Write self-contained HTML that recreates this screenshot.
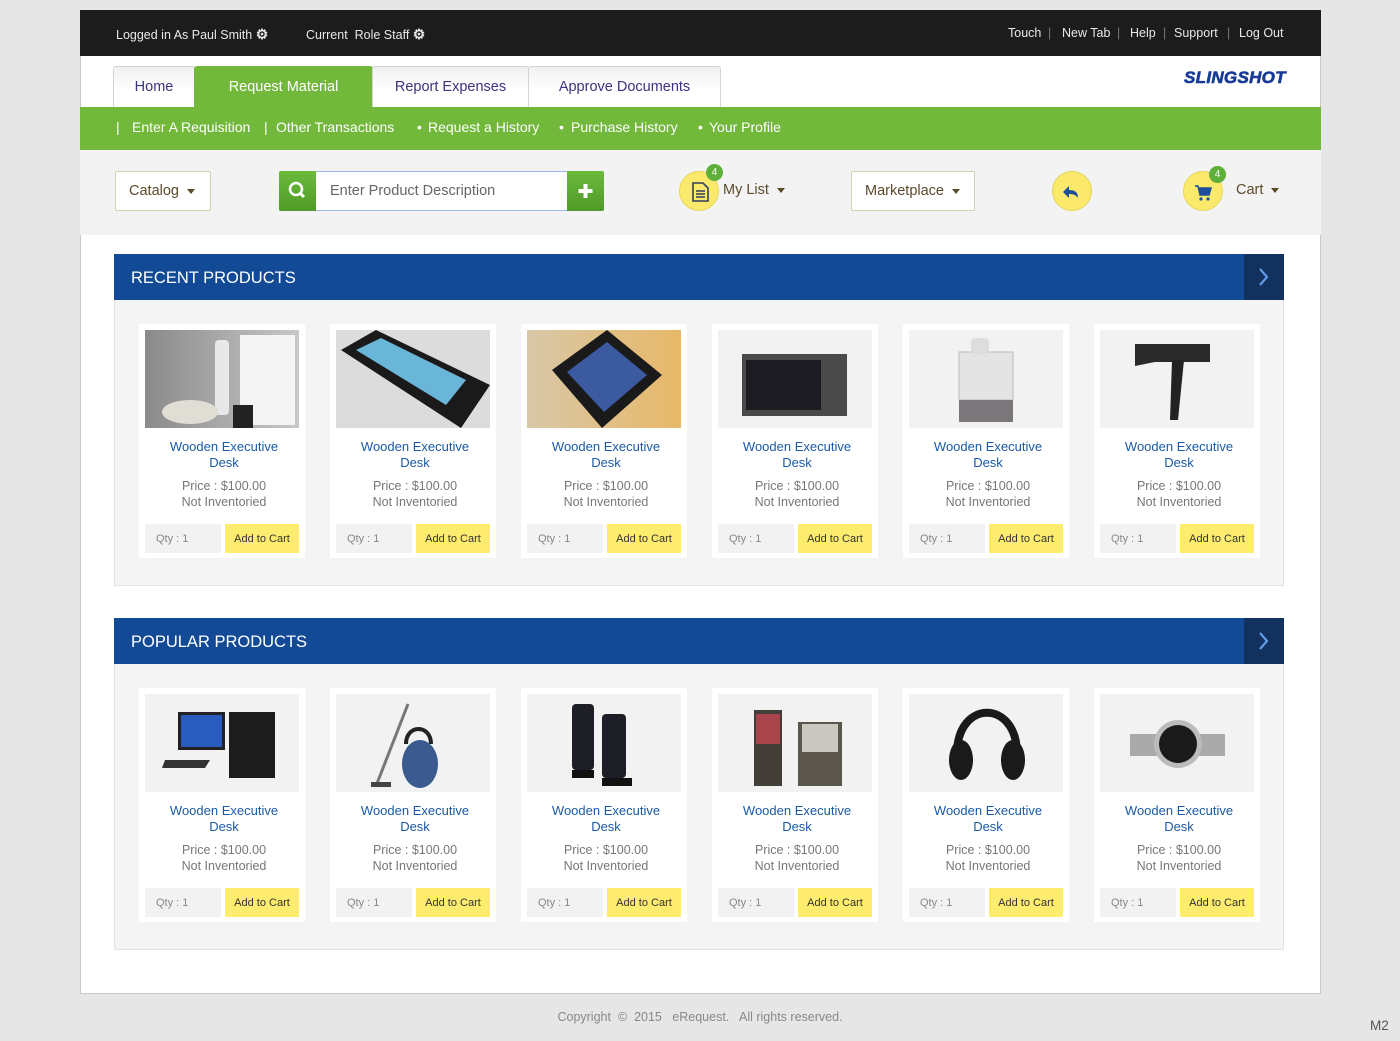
<!DOCTYPE html>
<html><head><meta charset="utf-8"><style>
*{margin:0;padding:0;box-sizing:border-box}
body{width:1400px;height:1041px;background:#e6e6e6;font-family:"Liberation Sans",sans-serif;position:relative;overflow:hidden}
.a{position:absolute}
#page{left:80px;top:10px;width:1241px;height:984px;background:#fff;border:1px solid #c8c8c8}
#top{left:80px;top:10px;width:1241px;height:46px;background:#1c1c1c;color:#e8e8e8;font-size:12.5px}
#top span{top:16px}
.sep{color:#777}
.tab{top:66px;height:41px;border:1px solid #d4d4d4;border-bottom:none;border-radius:3px 3px 0 0;background:linear-gradient(#f0f0f0,#fff 60%);color:#3b3480;font-size:14.5px;text-align:center;line-height:41px}
#green{left:80px;top:107px;width:1241px;height:43px;background:#72b83a;color:#fff;font-size:14px}
#green span{position:absolute;top:12px}
#tool{left:80px;top:150px;width:1241px;height:85px;background:#f3f3f3}
.btn{background:#fff;border:1px solid #d6d0b0;border-radius:2px;color:#5a4a2a;font-size:14.5px;line-height:38px;padding-left:13px}
.car{display:inline-block;width:0;height:0;border-left:4px solid transparent;border-right:4px solid transparent;border-top:5px solid #5a4a2a;vertical-align:middle;margin-left:8px}
.yc{width:40px;height:40px;border-radius:50%;background:#fbe96b;border:1px solid #e6d65a}
.badge{width:17px;height:17px;border-radius:50%;background:#5fb03a;color:#fff;font-size:10px;text-align:center;line-height:17px}
.hdr{left:114px;width:1170px;height:46px;background:#124a96;color:#fff;font-size:16.5px;line-height:48px;padding-left:17px}
.hdr .sq{position:absolute;right:0;top:0;width:40px;height:46px;background:#13315e}
.panel{left:114px;width:1170px;height:286px;background:#f4f4f4;border:1px solid #e2e2e2;border-top:none}
.card{width:166px;height:234px;background:#fff}
.img{position:absolute;left:6px;top:6px;width:154px;height:98px;background:#f2f2f2;overflow:hidden}
.t{position:absolute;left:2px;width:166px;text-align:center;top:115px;color:#1a5aa6;font-size:13px;line-height:16px}
.p{position:absolute;left:2px;width:166px;text-align:center;top:154px;color:#777;font-size:12.5px;line-height:16px}
.q{position:absolute;left:6px;top:200px;width:76px;height:29px;background:#f2f2f2;color:#888;font-size:11px;line-height:30px;padding-left:11px}
.ac{position:absolute;left:86px;top:200px;width:74px;height:29px;background:#fdec6e;color:#333;font-size:11px;line-height:30px;text-align:center}
</style></head><body>
<div id="page" class="a"></div>
<div id="top" class="a">
<span class="a" style="left:36px">Logged in As Paul Smith <b style="font-size:14px">⚙</b></span>
<span class="a" style="left:226px">Current &nbsp;Role Staff <b style="font-size:14px">⚙</b></span>
<span class="a" style="left:928px">Touch</span><span class="a sep" style="left:968px">|</span>
<span class="a" style="left:982px">New Tab</span><span class="a sep" style="left:1037px">|</span>
<span class="a" style="left:1050px">Help</span><span class="a sep" style="left:1083px">|</span>
<span class="a" style="left:1094px">Support</span><span class="a sep" style="left:1147px">|</span>
<span class="a" style="left:1159px">Log Out</span>
</div>
<div class="a tab" style="left:113px;width:82px">Home</div>
<div class="a tab" style="left:194px;width:179px;background:#72b83a;border-color:#72b83a;color:#fff">Request Material</div>
<div class="a tab" style="left:372px;width:157px">Report Expenses</div>
<div class="a tab" style="left:528px;width:193px">Approve Documents</div>
<div class="a" style="left:1184px;top:68px;color:#163a96;font-size:17px;font-weight:bold;font-style:italic;letter-spacing:0.3px;-webkit-text-stroke:0.6px #163a96">SLINGSHOT</div>
<div id="green" class="a">
<span style="left:36px">|</span><span style="left:52px">Enter A Requisition</span>
<span style="left:184px">|</span><span style="left:196px">Other Transactions</span>
<span style="left:337px">•</span><span style="left:348px">Request a History</span>
<span style="left:479px">•</span><span style="left:491px">Purchase History</span>
<span style="left:618px">•</span><span style="left:629px">Your Profile</span>
</div>
<div id="tool" class="a"></div>
<div class="a btn" style="left:115px;top:171px;width:96px;height:40px">Catalog<span class="car"></span></div>
<div class="a" style="left:279px;top:171px;width:325px;height:40px;border:1px solid #9ab8e8;border-radius:2px;background:#fff"></div>
<div class="a" style="left:279px;top:171px;width:37px;height:40px;background:linear-gradient(#6cbb3c,#4f9a28);border-radius:2px 0 0 2px"><svg width="37" height="40"><circle cx="17" cy="18" r="6" fill="none" stroke="#fff" stroke-width="2.5"/><line x1="21" y1="22" x2="25" y2="26" stroke="#fff" stroke-width="3"/></svg></div>
<div class="a" style="left:330px;top:183px;color:#666;font-size:14.5px">Enter Product Description</div>
<div class="a" style="left:567px;top:171px;width:37px;height:40px;background:linear-gradient(#6cbb3c,#4f9a28);border-radius:0 2px 2px 0"><svg width="37" height="40"><path d="M18.5 13v14M11.5 20h14" stroke="#fff" stroke-width="4"/></svg></div>
<div class="a yc" style="left:679px;top:171px"><svg width="40" height="40"><path d="M13 11h10l5 5v13h-15z" fill="none" stroke="#333c5c" stroke-width="1.6"/><path d="M16 19h9M16 22h9M16 25h9" stroke="#333c5c" stroke-width="1.4"/></svg></div>
<div class="a badge" style="left:706px;top:164px">4</div>
<div class="a" style="left:723px;top:182px;color:#5a4a2a;font-size:14.5px">My List<span class="car"></span></div>
<div class="a btn" style="left:851px;top:171px;width:124px;height:40px">Marketplace<span class="car"></span></div>
<div class="a yc" style="left:1052px;top:171px"><svg width="40" height="40"><path d="M25 26c0-6-3-8-9-8v-4l-6 6 6 6v-4c4 0 7 1 9 4z" fill="#1d4f9a"/></svg></div>
<div class="a yc" style="left:1183px;top:171px"><svg width="40" height="40"><path d="M11 14h3l2 9h9l2-7h-12" fill="#1d4f9a" stroke="#1d4f9a" stroke-width="1.5"/><circle cx="17" cy="27" r="1.6" fill="#1d4f9a"/><circle cx="24" cy="27" r="1.6" fill="#1d4f9a"/></svg></div>
<div class="a badge" style="left:1209px;top:166px">4</div>
<div class="a" style="left:1236px;top:182px;color:#5a4a2a;font-size:14.5px">Cart<span class="car"></span></div>

<div class="a hdr" style="top:254px">RECENT PRODUCTS<div class="sq"><svg width="40" height="46"><path d="M16 15l7 8-7 8" fill="none" stroke="#5f9de8" stroke-width="2.2"/></svg></div></div>
<div class="a panel" style="top:300px"></div>
<div class="a hdr" style="top:618px">POPULAR PRODUCTS<div class="sq"><svg width="40" height="46"><path d="M16 15l7 8-7 8" fill="none" stroke="#5f9de8" stroke-width="2.2"/></svg></div></div>
<div class="a panel" style="top:664px"></div>

<div class="a card" style="left:139px;top:324px"><div class="img" style="background:linear-gradient(90deg,#8a8a8a,#c8c8c8)"><svg width="154" height="98"><rect x="95" y="5" width="55" height="90" fill="#f4f4f4"/><rect x="70" y="10" width="14" height="75" rx="4" fill="#e8e8e8"/><ellipse cx="45" cy="82" rx="28" ry="12" fill="#e0ddd5"/><rect x="88" y="75" width="20" height="23" fill="#222"/></svg></div><div class="t">Wooden Executive<br>Desk</div><div class="p">Price : $100.00<br>Not Inventoried</div><div class="q">Qty : 1</div><div class="ac">Add to Cart</div></div>
<div class="a card" style="left:330px;top:324px"><div class="img" style="background:#dcdcdc"><svg width="154" height="98"><path d="M5 20L40 0 154 55 125 98z" fill="#1a1a1a"/><path d="M20 20L45 8 130 50 110 75z" fill="#6ab6d8"/></svg></div><div class="t">Wooden Executive<br>Desk</div><div class="p">Price : $100.00<br>Not Inventoried</div><div class="q">Qty : 1</div><div class="ac">Add to Cart</div></div>
<div class="a card" style="left:521px;top:324px"><div class="img" style="background:linear-gradient(90deg,#d8c8a8,#e8b868)"><svg width="154" height="98"><path d="M25 40L80 0 135 45 75 98z" fill="#1a1a1a"/><path d="M40 42L80 12 120 45 77 82z" fill="#3b5aa0"/></svg></div><div class="t">Wooden Executive<br>Desk</div><div class="p">Price : $100.00<br>Not Inventoried</div><div class="q">Qty : 1</div><div class="ac">Add to Cart</div></div>
<div class="a card" style="left:712px;top:324px"><div class="img"><svg width="154" height="98"><rect x="24" y="24" width="105" height="62" fill="#4a4a4a"/><rect x="28" y="30" width="75" height="50" fill="#1c1c22"/></svg></div><div class="t">Wooden Executive<br>Desk</div><div class="p">Price : $100.00<br>Not Inventoried</div><div class="q">Qty : 1</div><div class="ac">Add to Cart</div></div>
<div class="a card" style="left:903px;top:324px"><div class="img"><svg width="154" height="98"><rect x="50" y="22" width="54" height="48" fill="#e4e4e4" stroke="#bbb"/><rect x="50" y="70" width="54" height="22" fill="#7a767a"/><rect x="62" y="8" width="18" height="16" rx="4" fill="#ddd"/></svg></div><div class="t">Wooden Executive<br>Desk</div><div class="p">Price : $100.00<br>Not Inventoried</div><div class="q">Qty : 1</div><div class="ac">Add to Cart</div></div>
<div class="a card" style="left:1094px;top:324px"><div class="img"><svg width="154" height="98"><path d="M35 14h75v18H55l-20 4z" fill="#2a2a2a"/><path d="M72 30h12l-6 60h-8z" fill="#222"/></svg></div><div class="t">Wooden Executive<br>Desk</div><div class="p">Price : $100.00<br>Not Inventoried</div><div class="q">Qty : 1</div><div class="ac">Add to Cart</div></div>

<div class="a card" style="left:139px;top:688px"><div class="img"><svg width="154" height="98"><rect x="33" y="18" width="47" height="38" fill="#222"/><rect x="36" y="21" width="41" height="32" fill="#2a5cc0"/><rect x="84" y="18" width="46" height="66" fill="#1c1c1c"/><path d="M20 66h45l-5 8H17z" fill="#333"/></svg></div><div class="t">Wooden Executive<br>Desk</div><div class="p">Price : $100.00<br>Not Inventoried</div><div class="q">Qty : 1</div><div class="ac">Add to Cart</div></div>
<div class="a card" style="left:330px;top:688px"><div class="img"><svg width="154" height="98"><path d="M40 92L72 10" stroke="#777" stroke-width="3"/><ellipse cx="84" cy="70" rx="18" ry="24" fill="#3a5a90"/><path d="M70 50C70 30 95 30 95 50" fill="none" stroke="#222" stroke-width="4"/><rect x="35" y="88" width="20" height="5" fill="#444"/></svg></div><div class="t">Wooden Executive<br>Desk</div><div class="p">Price : $100.00<br>Not Inventoried</div><div class="q">Qty : 1</div><div class="ac">Add to Cart</div></div>
<div class="a card" style="left:521px;top:688px"><div class="img"><svg width="154" height="98"><rect x="45" y="10" width="22" height="66" rx="4" fill="#1e1e26"/><rect x="75" y="20" width="24" height="64" rx="4" fill="#1e1e26"/><rect x="45" y="76" width="22" height="8" fill="#111"/><rect x="75" y="84" width="30" height="8" fill="#111"/></svg></div><div class="t">Wooden Executive<br>Desk</div><div class="p">Price : $100.00<br>Not Inventoried</div><div class="q">Qty : 1</div><div class="ac">Add to Cart</div></div>
<div class="a card" style="left:712px;top:688px"><div class="img"><svg width="154" height="98"><rect x="36" y="16" width="28" height="76" fill="#443e38"/><rect x="38" y="20" width="24" height="30" fill="#a8444c"/><rect x="80" y="28" width="44" height="64" fill="#5a564c"/><rect x="84" y="30" width="36" height="28" fill="#c8c8c0"/></svg></div><div class="t">Wooden Executive<br>Desk</div><div class="p">Price : $100.00<br>Not Inventoried</div><div class="q">Qty : 1</div><div class="ac">Add to Cart</div></div>
<div class="a card" style="left:903px;top:688px"><div class="img"><svg width="154" height="98"><path d="M48 60C48 5 108 5 108 60" fill="none" stroke="#1a1a1a" stroke-width="8"/><ellipse cx="52" cy="66" rx="12" ry="20" fill="#1a1a1a"/><ellipse cx="104" cy="66" rx="12" ry="20" fill="#1a1a1a"/></svg></div><div class="t">Wooden Executive<br>Desk</div><div class="p">Price : $100.00<br>Not Inventoried</div><div class="q">Qty : 1</div><div class="ac">Add to Cart</div></div>
<div class="a card" style="left:1094px;top:688px"><div class="img"><svg width="154" height="98"><path d="M30 40h95v22H30z" fill="#aaa"/><circle cx="78" cy="50" r="24" fill="#bbb"/><circle cx="78" cy="50" r="19" fill="#1a1a1a"/></svg></div><div class="t">Wooden Executive<br>Desk</div><div class="p">Price : $100.00<br>Not Inventoried</div><div class="q">Qty : 1</div><div class="ac">Add to Cart</div></div>

<div class="a" style="left:0;width:1400px;top:1010px;text-align:center;color:#888;font-size:12.5px">Copyright &nbsp;© &nbsp;2015 &nbsp; eRequest. &nbsp; All rights reserved.</div>
<div class="a" style="left:1370px;top:1018px;color:#555;font-size:13.5px">M2</div>
</body></html>
